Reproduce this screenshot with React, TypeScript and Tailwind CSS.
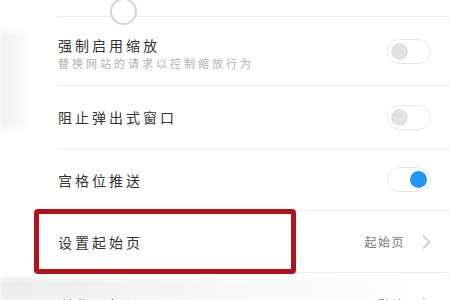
import React from "react";

function Toggle({ on }: { on?: boolean }) {
  return (
    <div className="w-[44px] h-[25px] rounded-full border border-[#e6e6e6] bg-white flex items-center px-[3px]">
      {on ? (
        <div className="ml-auto w-[17px] h-[17px] rounded-full bg-[#2196f3]" />
      ) : (
        <div className="w-[17px] h-[17px] rounded-full bg-[#e2e2e2]" />
      )}
    </div>
  );
}

function Chevron() {
  return (
    <svg width="10" height="16" viewBox="0 0 10 16" fill="none">
      <path d="M2 1.5 L8.5 8 L2 14.5" stroke="#c4c4c4" strokeWidth="1.3" />
    </svg>
  );
}

export default function App() {
  const font = "font-['Noto_Sans_CJK_SC','Noto_Sans',sans-serif]";
  return (
    <div className={`relative w-[450px] h-[300px] overflow-hidden bg-white ${font}`}>
      <div className="absolute left-0 top-[30px] w-[30px] h-[100px] rounded-r-[12px] bg-gradient-to-r from-[#f0f0f0] to-white blur-[3px]" />
      <div className="absolute left-0 top-[278px] w-[450px] h-[22px] bg-gradient-to-r from-[#ececec] via-[#f8f8f8] to-white blur-[2px]" />
      <div className="relative ml-[57px] flex flex-col">
        <div className="h-[17px] border-b border-[#ececec]" />
        <div className="h-[69px] border-b border-[#ececec] flex items-center justify-between pr-[19px]">
          <div className="flex flex-col pt-[4px] pl-[1px]">
            <div className="text-[14px] leading-[20px] tracking-[3px] text-[#333]">强制启用缩放</div>
            <div className="text-[11px] leading-[16px] tracking-[3px] text-[#b0b0b0]">替换网站的请求以控制缩放行为</div>
          </div>
          <Toggle />
        </div>
        <div className="h-[63px] border-b border-[#ececec] flex items-center justify-between pr-[19px]">
          <div className="pl-[1px] text-[14px] leading-[20px] tracking-[3px] text-[#333]">阻止弹出式窗口</div>
          <Toggle />
        </div>
        <div className="h-[62px] border-b border-[#ececec] flex items-center justify-between pr-[19px]">
          <div className="pl-[1px] text-[14px] leading-[20px] tracking-[3px] text-[#333]">宫格位推送</div>
          <Toggle on />
        </div>
        <div className="h-[62px] border-b border-[#ececec] flex items-center justify-between pr-[19px]">
          <div className="pl-[1px] text-[14px] leading-[20px] tracking-[3px] text-[#333]">设置起始页</div>
          <div className="flex items-center gap-[16px]">
            <span className="text-[12px] tracking-[1.5px] text-[#777]">起始页</span>
            <Chevron />
          </div>
        </div>
        <div className="h-[62px] pt-[2px] flex items-center justify-between pr-[19px]">
          <div className="pl-[1px] text-[14px] leading-[20px] tracking-[3px] text-[#333]">浏览器标识</div>
          <div className="flex items-center gap-[16px]">
            <span className="text-[12px] tracking-[1.5px] text-[#777]">默认</span>
            <Chevron />
          </div>
        </div>
      </div>
      <div className="absolute left-[110px] top-[-2px] w-[27px] h-[27px] rounded-full border-2 border-[#d0d0e6] bg-white" />
      <div className="absolute left-[34px] top-[209px] w-[262px] h-[65px] rounded-[4px] border-[5px] border-[#b3121a]" />
    </div>
  );
}
